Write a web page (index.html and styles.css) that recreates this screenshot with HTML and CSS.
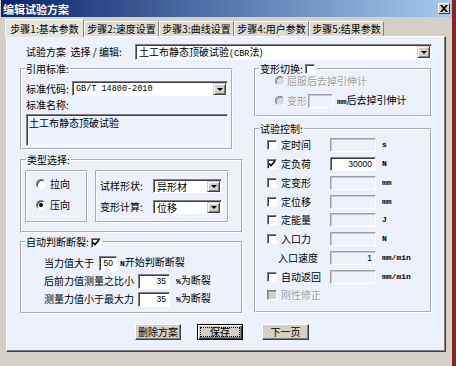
FILE: index.html
```html
<!DOCTYPE html>
<html lang="zh-CN">
<head>
    <meta charset="UTF-8">
    <title>编辑试验方案</title>
    <link rel="stylesheet" href="styles.css">
</head>
<body>
<div class="window">
    <div class="titlebar">
        <span class="title">编辑试验方案</span>
        <span class="close">
            <svg width="8" height="7" viewBox="0 0 8 7"><path d="M0 0h2.2L4 2.3 5.8 0H8L5.1 3.5 8 7H5.8L4 4.7 2.2 7H0l2.9-3.5z" fill="#000"/></svg>
        </span>
    </div>

    <div class="tabs">
        <span class="tab active">步骤1:基本参数</span>
        <span class="tab">步骤2:速度设置</span>
        <span class="tab">步骤3:曲线设置</span>
        <span class="tab">步骤4:用户参数</span>
        <span class="tab">步骤5:结果参数</span>
    </div>

    <div class="page">
        <div class="scheme-row">
            <span class="scheme-label">试验方案&nbsp;&nbsp;选择 / 编辑:</span>
            <div class="combo scheme-combo">
                <span class="combo-text">土工布静态顶破试验<span class="latin">(CBR</span>法)</span>
                <span class="drop"></span>
            </div>
        </div>

        <div class="columns">
            <div class="col-left">
                <fieldset class="group std-group">
                    <legend>引用标准:</legend>
                    <div class="std-row">
                        <span class="std-label">标准代码:</span>
                        <div class="combo code-combo">
                            <span class="combo-text mono">GB/T 14800-2010</span>
                            <span class="drop"></span>
                        </div>
                    </div>
                    <div class="std-name">标准名称:</div>
                    <div class="memo">土工布静态顶破试验</div>
                </fieldset>

                <fieldset class="group type-group">
                    <legend>类型选择:</legend>
                    <div class="type-body">
                        <div class="inner-box dir-box">
                            <label class="radio-row"><span class="radio"></span>拉向</label>
                            <label class="radio-row"><span class="radio on"></span>压向</label>
                        </div>
                        <div class="inner-box shape-box">
                            <div class="shape-row">
                                <span class="shape-label">试样形状:</span>
                                <div class="combo small-combo">
                                    <span class="combo-text">异形材</span>
                                    <span class="drop"></span>
                                </div>
                            </div>
                            <div class="shape-row">
                                <span class="shape-label">变形计算:</span>
                                <div class="combo small-combo">
                                    <span class="combo-text">位移</span>
                                    <span class="drop"></span>
                                </div>
                            </div>
                        </div>
                    </div>
                </fieldset>

                <fieldset class="group break-group">
                    <legend>自动判断断裂: <span class="chk on"><svg width="8" height="8" viewBox="0 0 8 8"><path d="M1 3.5l2 2 4-4.5" fill="none" stroke="#000" stroke-width="1.7"/></svg></span></legend>
                    <div class="break-row">
                        <span class="break-label">当力值大于</span>
                        <span class="num short">50</span>
                        <span class="suffix"><span class="unit">N</span>开始判断断裂</span>
                    </div>
                    <div class="break-row">
                        <span class="break-label wide">后前力值测量之比小</span>
                        <span class="num">35</span>
                        <span class="suffix pct"><span class="unit">%</span>为断裂</span>
                    </div>
                    <div class="break-row">
                        <span class="break-label wide">测量力值小于最大力</span>
                        <span class="num">35</span>
                        <span class="suffix pct"><span class="unit">%</span>为断裂</span>
                    </div>
                </fieldset>
            </div>

            <div class="col-right">
                <fieldset class="group ext-group">
                    <legend>变形切换: <span class="chk"></span></legend>
                    <div class="ext-row first">
                        <span class="radio off"></span><span class="dim">屈服后去掉引伸计</span>
                    </div>
                    <div class="ext-row">
                        <span class="radio off"></span><span class="dim">变形</span>
                        <span class="field ext-field"></span>
                        <span class="ext-after"><span class="unit">mm</span>后去掉引伸计</span>
                    </div>
                </fieldset>

                <fieldset class="group ctl-group">
                    <legend>试验控制:</legend>
                    <div class="ctl-grid">
                        <span class="chk"></span><span>定时间</span><span class="field"></span><span class="unit">s</span>
                        <span class="chk on"><svg width="8" height="8" viewBox="0 0 8 8"><path d="M1 3.5l2 2 4-4.5" fill="none" stroke="#000" stroke-width="1.7"/></svg></span><span>定负荷</span><span class="field white">30000</span><span class="unit">N</span>
                        <span class="chk"></span><span>定变形</span><span class="field"></span><span class="unit">mm</span>
                        <span class="chk"></span><span>定位移</span><span class="field"></span><span class="unit">mm</span>
                        <span class="chk"></span><span>定能量</span><span class="field"></span><span class="unit">J</span>
                        <span class="chk"></span><span>入口力</span><span class="field"></span><span class="unit">N</span>
                        <span class="ctl-plain">入口速度</span><span class="field">1</span><span class="unit">mm/min</span>
                        <span class="chk"></span><span>自动返回</span><span class="field"></span><span class="unit">mm/min</span>
                        <span class="chk off"></span><span class="dim">刚性修正</span>
                    </div>
                </fieldset>
            </div>
        </div>

        <div class="actions">
            <button class="btn">删除方案</button>
            <button class="btn default">保存</button>
            <button class="btn">下一页</button>
        </div>
    </div>
</div>
</body>
</html>
```

FILE: styles.css
```css
* {
    box-sizing: border-box;
}
body {
    margin: 0;
    background: #7e2828;
    font-family: "Noto Sans CJK SC", "Noto Sans", sans-serif;
    font-size: 10px;
    line-height: 12px;
    color: #000;
}
.window {
    width: 452px;
    height: 366px;
    background: #d4d0c8;
    overflow: hidden;
}
.titlebar {
    height: 17px;
    margin-left: 1px;
    padding: 0 2px 0 2px;
    background: linear-gradient(to right, #0a246a, #a6caf0);
    display: flex;
    align-items: center;
    justify-content: space-between;
}
.title {
    color: #fff;
    font-weight: bold;
    font-size: 11px;
}
.close {
    width: 12px;
    height: 11px;
    background: #d4d0c8;
    border: 1px solid;
    border-color: #fff #404040 #404040 #fff;
    display: flex;
    align-items: center;
    justify-content: center;
}

/* tab strip */
.tabs {
    display: flex;
    align-items: flex-end;
    height: 18px;
    margin-top: 1px;
    padding-left: 5px;
    position: relative;
    z-index: 1;
}
.tab {
    width: 75px;
    height: 15px;
    line-height: 14px;
    text-align: center;
    background: #dedbd4;
    border: 1px solid;
    border-bottom: none;
    border-color: #fff #808080 transparent #fff;
    white-space: nowrap;
}
.tab.active {
    width: 79px;
    height: 18px;
    margin-bottom: -1px;
    line-height: 18px;
    background: #e6e4de;
}

/* tab page */
.page {
    width: 440px;
    height: 316px;
    margin-left: 6px;
    padding: 7px 12px 0 13px;
    background: #ecf1fb;
    border: 1px solid;
    border-color: #fff #404040 #404040 #fff;
    box-shadow: inset -1px -1px 0 #808080;
}
.scheme-row {
    display: flex;
    align-items: center;
    height: 16px;
}
.scheme-label {
    width: 115px;
    padding-left: 6px;
    white-space: nowrap;
}
.latin,
.mono {
    font-family: "Liberation Mono", monospace;
    font-size: 8.5px;
}

/* combo box */
.combo {
    display: flex;
    height: 15px;
    background: #fff;
    border: 1px solid;
    border-color: #808080 #fff #fff #808080;
    box-shadow: inset 1px 1px 0 #404040;
    padding: 1px 1px 0 3px;
}
.combo-text {
    flex: 1;
    line-height: 12px;
    white-space: nowrap;
}
.drop {
    width: 13px;
    height: 12px;
    background: #d4d0c8;
    border: 1px solid;
    border-color: #d4d0c8 #404040 #404040 #d4d0c8;
    box-shadow: inset 1px 1px 0 #fff, inset -1px -1px 0 #808080;
    display: flex;
    align-items: center;
    justify-content: center;
}
.drop::after {
    content: "";
    border-left: 3px solid transparent;
    border-right: 3px solid transparent;
    border-top: 3px solid #000;
}
.scheme-combo {
    width: 297px;
    height: 16px;
}

/* columns */
.columns {
    display: flex;
    gap: 11px;
    margin-top: 3px;
}
.col-left {
    width: 223px;
    display: flex;
    flex-direction: column;
}
.col-right {
    width: 178px;
    display: flex;
    flex-direction: column;
}

/* group boxes */
.group {
    margin: 0;
    padding: 0;
    min-width: 0;
    border: 2px groove #fff;
}
.group legend {
    padding: 0 1px;
    line-height: 12px;
    white-space: nowrap;
}
.std-group {
    margin-right: 10px;
    padding: 6px 3px 2px 4px;
}
.std-group legend {
    margin-left: -1px;
}
.std-row {
    display: flex;
    align-items: center;
}
.std-label {
    width: 46px;
}
.code-combo {
    width: 156px;
}
.std-name {
    margin-top: 3px;
}
.memo {
    height: 32px;
    margin-top: 3px;
    padding: 2px 2px;
    background: #eef2fb;
    border: 1px solid;
    border-color: #808080 #fff #fff #808080;
    box-shadow: inset 1px 1px 0 #404040;
}

.type-group {
    margin-top: 4px;
    padding: 4px 12px 8px 3px;
}
.type-group legend {
    margin-left: 1px;
}
.type-body {
    display: flex;
    gap: 7px;
}
.inner-box {
    height: 53px;
    border: 2px groove #fff;
}
.dir-box {
    width: 63px;
    padding: 6px 0 0 9px;
}
.radio-row {
    display: flex;
    align-items: center;
    height: 12px;
}
.radio-row + .radio-row {
    margin-top: 9px;
}
.radio {
    width: 10px;
    height: 10px;
    margin-right: 4px;
    border-radius: 50%;
    background: #fff;
    border: 1px solid;
    border-color: #808080 #fff #fff #808080;
    box-shadow: inset 1px 1px 0 #404040;
    display: flex;
    align-items: center;
    justify-content: center;
    flex: none;
}
.radio.on::after {
    content: "";
    width: 4px;
    height: 4px;
    border-radius: 50%;
    background: #000;
}
.radio.off {
    margin-right: 2px;
    background: #dcdcdc;
    box-shadow: inset 1px 1px 0 #a0a0a0;
}
.shape-box {
    width: 134px;
    padding: 7px 0 0 3px;
}
.shape-row {
    display: flex;
    align-items: center;
}
.shape-row + .shape-row {
    margin-top: 7px;
}
.shape-label {
    width: 53px;
}
.small-combo {
    width: 69px;
    height: 14px;
}
.small-combo .drop {
    height: 11px;
}

/* checkbox */
.chk {
    display: inline-flex;
    align-items: center;
    justify-content: center;
    width: 10px;
    height: 10px;
    background: #fff;
    border: 1px solid;
    border-color: #808080 #fff #fff #808080;
    box-shadow: inset 1px 1px 0 #404040;
    vertical-align: -1px;
}
.chk.off {
    background: #d4d0c8;
    box-shadow: inset 1px 1px 0 #a0a0a0;
}

.break-group {
    margin-top: 3px;
    padding: 8px 0 6px 22px;
}
.break-group legend {
    margin-left: -19px;
}
.break-row {
    display: flex;
    align-items: center;
    height: 14px;
}
.break-row + .break-row {
    margin-top: 4px;
}
.break-label {
    width: 55px;
    white-space: nowrap;
}
.break-label.wide {
    width: 94px;
}
.num {
    width: 32px;
    height: 15px;
    padding-right: 3px;
    text-align: right;
    font-family: "Liberation Sans", sans-serif;
    font-size: 8.5px;
    line-height: 12px;
    background: #fff;
    border: 1px solid;
    border-color: #808080 #fff #fff #808080;
    box-shadow: inset 1px 1px 0 #404040;
}
.num.short {
    width: 18px;
}
.suffix {
    margin-left: 3px;
    white-space: nowrap;
}
.suffix.pct {
    margin-left: 6px;
}
.unit {
    font-family: "Liberation Mono", monospace;
    font-size: 8px;
    font-weight: bold;
}

.ext-group {
    padding: 0 0 7px 19px;
}
.ext-group legend {
    margin-left: -16px;
}
.ext-row {
    display: flex;
    align-items: center;
    height: 14px;
}
.ext-row.first {
    height: 12px;
}
.ext-row + .ext-row {
    margin-top: 7px;
}
.dim {
    color: #a0a0a0;
    text-shadow: 1px 1px 0 #fff;
}
.field {
    height: 14px;
    padding-right: 3px;
    text-align: right;
    font-family: "Liberation Sans", sans-serif;
    font-size: 8.5px;
    line-height: 12px;
    background: #eef2fb;
    border: 1px solid;
    border-color: #a0a0a0 #fff #fff #a0a0a0;
    box-shadow: inset 1px 1px 0 #c8c8c8;
}
.field.white {
    background: #fff;
    border-color: #808080 #fff #fff #808080;
    box-shadow: inset 1px 1px 0 #404040;
}
.ext-field {
    width: 25px;
    margin-left: 1px;
}
.ext-after {
    margin-left: 4px;
    white-space: nowrap;
}

.ctl-group {
    margin-top: 6px;
    padding: 1px 0 6px 11px;
}
.ctl-group legend {
    margin-left: -8px;
}
.ctl-grid {
    display: grid;
    grid-template-columns: 14px 49px 46px auto;
    grid-auto-rows: 18.75px;
    align-items: center;
}
.ctl-grid .unit {
    margin-left: 6px;
}
.ctl-plain {
    grid-column: 1 / 3;
    padding-left: 11px;
}

/* buttons */
.actions {
    display: flex;
    margin-top: 10px;
    padding-left: 115px;
}
.btn {
    width: 46px;
    height: 16px;
    padding: 0;
    font: inherit;
    line-height: 12px;
    color: #000;
    background: #d4d0c8;
    border: 1px solid;
    border-color: #fff #404040 #404040 #fff;
    box-shadow: inset -1px -1px 0 #808080;
}
.btn + .btn {
    margin-left: 16px;
}
.btn:last-child {
    width: 47px;
    margin-left: 19px;
}
.btn.default {
    border-color: #000;
    box-shadow: inset 1px 1px 0 #fff, inset -1px -1px 0 #404040, inset -2px -2px 0 #808080;
    outline: 1px dotted #000;
    outline-offset: -4px;
}
```
